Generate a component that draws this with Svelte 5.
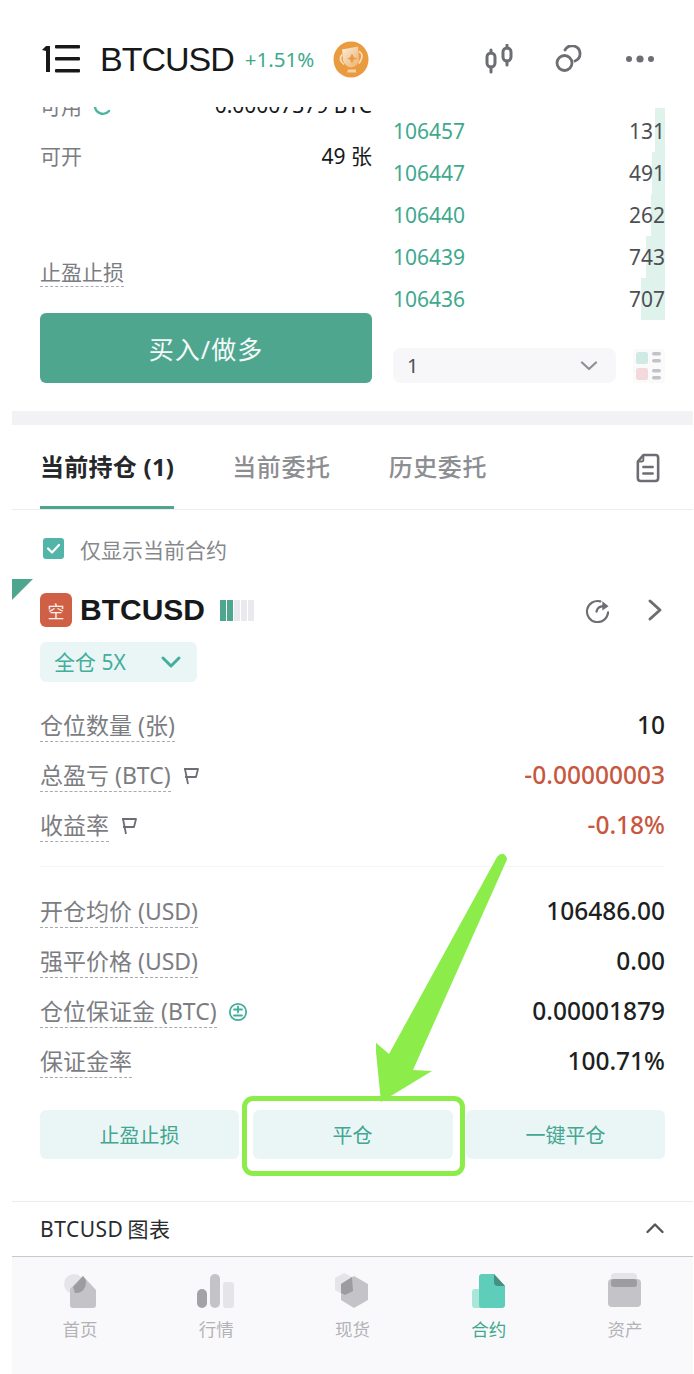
<script>
    const asks = [
        { price: '106457', size: '131', depth: 10 },
        { price: '106447', size: '491', depth: 13 },
        { price: '106440', size: '262', depth: 14 },
        { price: '106439', size: '743', depth: 19 },
        { price: '106436', size: '707', depth: 24 }
    ];

    const topRows = [
        { label: '仓位数量 (张)', value: '10' },
        { label: '总盈亏 (BTC)', value: '-0.00000003', flag: true, down: true },
        { label: '收益率', value: '-0.18%', flag: true, down: true }
    ];

    const bottomRows = [
        { label: '开仓均价 (USD)', value: '106486.00' },
        { label: '强平价格 (USD)', value: '0.00' },
        { label: '仓位保证金 (BTC)', value: '0.00001879', plus: true },
        { label: '保证金率', value: '100.71%' }
    ];

    const navItems = ['首页', '行情', '现货', '合约', '资产'];
</script>

<div class="page">
    <header class="top">
        <svg class="logo" width="40" height="28" viewBox="0 0 40 28" fill="#17181a">
            <path d="M1 5 L5 1 H9 V27 H5 V6 Z" />
            <rect x="14" y="0" width="25" height="3.6" rx="1" />
            <rect x="14" y="12" width="25" height="3.6" rx="1" />
            <rect x="14" y="24" width="25" height="3.6" rx="1" />
        </svg>
        <span class="symbol">BTCUSD</span>
        <span class="change">+1.51%</span>
        <svg class="medal" width="36" height="37" viewBox="0 0 36 36">
            <defs>
                <linearGradient id="cup" x1="0" y1="0" x2="1" y2="1">
                    <stop offset="0" stop-color="#fbeedd" />
                    <stop offset="1" stop-color="#eeb06a" />
                </linearGradient>
            </defs>
            <ellipse cx="18" cy="18" rx="17.5" ry="18" fill="#ea9b3f" />
            <path d="M9 8 L25 5 L26 19 Q25 25 18 26 Q12 25 10 19 Z" fill="url(#cup)" />
            <path d="M26 10 Q32 13 26 22 M9 13 Q5 18 11 23" fill="none" stroke="#f9e0c0" stroke-width="1.6" />
            <path d="M15 28 H23 V31 H14 Z" fill="#f6d3a6" />
            <path d="M19 12 L21 16 L25 17 L21 18 L19 22 L17 18 L14 17 L17 16 Z" fill="#e89a45" />
        </svg>
        <div class="top-actions">
            <svg width="28" height="30" viewBox="0 0 28 30" fill="none" stroke="#6d6e73" stroke-width="3" stroke-linecap="round">
                <rect x="2" y="9" width="8" height="14" rx="4" />
                <path d="M6 6 V9 M6 23 V28" />
                <rect x="18" y="4" width="8" height="13" rx="4" />
                <path d="M22 1 V4 M22 17 V21" />
            </svg>
            <svg width="28" height="28" viewBox="0 0 28 28" fill="none" stroke="#6d6e73" stroke-width="2.8">
                <circle cx="9.5" cy="18" r="7.5" />
                <path d="M10 5 A8 8 0 0 1 25 8 A8 8 0 0 1 20 16" stroke-linecap="round" />
            </svg>
            <svg width="30" height="10" viewBox="0 0 30 10" fill="#6d6e73">
                <circle cx="4" cy="5" r="3" />
                <circle cx="15" cy="5" r="3.6" />
                <circle cx="26" cy="5" r="3" />
            </svg>
        </div>
    </header>

    <section class="trade">
        <div class="trade-form">
            <div class="form-row">
                <span class="muted">可用
                    <svg class="swap" width="20" height="20" viewBox="0 0 20 20" fill="none" stroke="#4db3a2" stroke-width="2.4" stroke-linecap="round">
                        <path d="M2 8 A8 8 0 0 0 16 14 M12 8 H18" />
                    </svg>
                </span>
                <span>0.00007379 BTC</span>
            </div>
            <div class="form-row">
                <span class="muted">可开</span>
                <span>49 张</span>
            </div>
            <div class="stop-row"><span class="muted dashed">止盈止损</span></div>
            <button class="buy">买入/做多</button>
        </div>

        <div class="book">
            <div class="asks">
                {#each asks as ask}
                    <div class="ask">
                        <span class="depth" style="width: {ask.depth}px"></span>
                        <span class="price">{ask.price}</span>
                        <span class="size">{ask.size}</span>
                    </div>
                {/each}
            </div>
            <div class="book-foot">
                <div class="select">
                    <span>1</span>
                    <svg width="18" height="10" viewBox="0 0 18 10" fill="none" stroke="#8f9095" stroke-width="2.2" stroke-linecap="round" stroke-linejoin="round">
                        <path d="M2 1.5 L9 8 L16 1.5" />
                    </svg>
                </div>
                <svg class="layout" width="32" height="34" viewBox="0 0 32 34">
                    <rect width="32" height="34" rx="3" fill="#fafafb" />
                    <rect x="3" y="3" width="12" height="12" rx="2.5" fill="#cfeae5" />
                    <rect x="3" y="19" width="12" height="12" rx="2.5" fill="#f3d9dc" />
                    <rect x="19" y="3" width="9" height="3.5" rx="1.7" fill="#c2c3c8" />
                    <rect x="19" y="10" width="9" height="3.5" rx="1.7" fill="#c2c3c8" />
                    <rect x="19" y="20" width="9" height="3.5" rx="1.7" fill="#c2c3c8" />
                    <rect x="19" y="27" width="9" height="3.5" rx="1.7" fill="#c2c3c8" />
                </svg>
            </div>
        </div>
    </section>

    <div class="band"></div>

    <nav class="tabs">
        <span class="tab active">当前持仓 (1)</span>
        <span class="tab">当前委托</span>
        <span class="tab">历史委托</span>
        <svg class="doc" width="24" height="30" viewBox="0 0 26 32" fill="none" stroke="#6d6e73" stroke-width="2.8" stroke-linejoin="round">
            <path d="M8 2 H21 Q24 2 24 5 V27 Q24 30 21 30 H5 Q2 30 2 27 V9 Z" />
            <path d="M8 2 V7 Q8 9 6 9 H2" stroke-width="2" />
            <path d="M8 15 H18 M8 22 H18" stroke-linecap="round" />
        </svg>
    </nav>

    <label class="only-current">
        <svg width="21" height="21" viewBox="0 0 21 21">
            <rect width="21" height="21" rx="3" fill="#53b5a7" />
            <path d="M5 10.5 L9 14.5 L16 7" fill="none" stroke="#fff" stroke-width="2.2" stroke-linecap="round" stroke-linejoin="round" />
        </svg>
        仅显示当前合约
    </label>

    <article class="position">
        <span class="corner"></span>
        <div class="pos-head">
            <span class="side">空</span>
            <span class="pos-name">BTCUSD</span>
            <span class="risk">
                {#each [1, 2, 3, 4, 5] as n}
                    <i class:on={n < 3}></i>
                {/each}
            </span>
            <svg class="share" width="25" height="25" viewBox="0 0 26 26" fill="none" stroke="#6d6e73" stroke-width="2.2" stroke-linecap="round">
                <path d="M16 3.5 A11 11 0 1 0 24 15" />
                <path d="M12 14 Q13 9 19 8.5" stroke-width="2.4" />
                <path d="M18 3.5 L24.5 8.5 L18 13 Z" fill="#6d6e73" stroke="none" />
            </svg>
            <svg class="next" width="16" height="24" viewBox="0 0 16 24" fill="none" stroke="#6d6e73" stroke-width="3" stroke-linecap="round" stroke-linejoin="round">
                <path d="M3 3 L13 12 L3 21" />
            </svg>
        </div>

        <div class="chip">
            <span>全仓 5X</span>
            <svg width="22" height="14" viewBox="0 0 22 14" fill="none" stroke="#43ae9c" stroke-width="3" stroke-linecap="round" stroke-linejoin="round">
                <path d="M3 3 L11 11 L19 3" />
            </svg>
        </div>

        <div class="stats first">
            {#each topRows as row}
                <div class="stat">
                    <span class="muted dashed">{row.label}</span>
                    {#if row.flag}
                        <svg class="flag" width="18" height="18" viewBox="0 0 18 18" fill="none" stroke="#6d6e73" stroke-width="1.8" stroke-linejoin="round">
                            <path d="M2 2 H16 L14 10 H3 M3 2 L6 17" />
                        </svg>
                    {/if}
                    <span class="value" class:down={row.down}>{row.value}</span>
                </div>
            {/each}
        </div>

        <div class="stats second">
            {#each bottomRows as row}
                <div class="stat">
                    <span class="muted dashed">{row.label}</span>
                    {#if row.plus}
                        <svg class="flag" width="20" height="20" viewBox="0 0 20 20" fill="none" stroke="#43ae9c" stroke-width="1.8" stroke-linecap="round">
                            <circle cx="10" cy="10" r="8.2" />
                            <path d="M6 7.5 H14 M10 4.5 V10.5 M6 13.5 H14" />
                        </svg>
                    {/if}
                    <span class="value">{row.value}</span>
                </div>
            {/each}
        </div>

        <div class="actions">
            <button>止盈止损</button>
            <button>平仓</button>
            <button>一键平仓</button>
        </div>
    </article>

    <div class="chart-row">
        <span>BTCUSD<span class="chart-word">图表</span></span>
        <svg width="20" height="12" viewBox="0 0 20 12" fill="none" stroke="#55565a" stroke-width="2.4" stroke-linecap="round" stroke-linejoin="round">
            <path d="M2.5 10 L10 2.5 L17.5 10" />
        </svg>
    </div>

    <footer class="nav">
        {#each navItems as item, i}
            <div class="nav-item" class:current={i === 3}>
                <svg width="40" height="36" viewBox="0 0 40 36">
                    {#if i === 0}
                        <g transform="translate(3 0)">
                            <circle cx="11" cy="11" r="10" fill="#e5e5e9" />
                            <path d="M20 3 L33 17 V32 Q33 35 30 35 H10 Q7 35 7 32 V16 Z" fill="#c3c3c8" />
                            <path d="M20 3 L10 14 L12 20 A10 10 0 0 0 20 3 Z" fill="#9d9da1" />
                        </g>
                    {:else if i === 1}
                        <rect x="1" y="16" width="10" height="19" rx="5" fill="#a3a3a7" />
                        <rect x="14" y="1" width="10" height="34" rx="5" fill="#c3c3c8" />
                        <rect x="27" y="9" width="11" height="26" rx="3" fill="#e5e5e9" />
                    {:else if i === 2}
                        <g transform="translate(2 0)">
                            <path d="M10 0 L20 5 V17 L10 22 L1 17 V5 Z" fill="#e5e5e9" />
                            <path d="M20 3 L34 11 V27 L20 35 L7 27 V11 Z" fill="#c3c3c8" />
                            <path d="M18 4 L7 11 V20 L11 22 L19 18 Z" fill="#9d9da1" />
                        </g>
                    {:else if i === 3}
                        <g transform="translate(1 0)">
                            <rect x="2" y="16" width="14" height="19" rx="3" fill="#a8e6d8" />
                            <path d="M12 1 H24 L35 13 V32 Q35 35 32 35 H12 Q9 35 9 32 V4 Q9 1 12 1 Z" fill="#5ecdb9" />
                            <path d="M24 1 L35 13 H28 Q24 13 24 9 Z" fill="#47907f" />
                        </g>
                    {:else}
                        <rect x="6" y="0" width="26" height="14" rx="4" fill="#e5e5e9" />
                        <rect x="3" y="6" width="33" height="28" rx="4" fill="#c3c3c8" />
                        <rect x="6" y="6" width="26" height="8" rx="3" fill="#9d9da1" />
                    {/if}
                </svg>
                <span>{item}</span>
            </div>
        {/each}
    </footer>

    <!-- annotation drawn over the screenshot -->
    <svg class="arrow" width="135" height="255" viewBox="376 852 135 255">
        <path d="M497 857 Q503 850 507 858 Q507 861 505 864 L413 1070 L432 1071 L381 1102 L375 1042 L389 1054 Z" fill="#8ced4a" />
    </svg>
    <span class="highlight"></span>
</div>

<style>
    :global(body) {
        background: #fff;
    }

    .page {
        position: relative;
        width: 694px;
        height: 1374px;
        overflow: hidden;
        padding: 0 1px 0 12px;
        box-sizing: border-box;
        background: #fff;
        color: #17181a;
        font-family: "Noto Sans", "Noto Sans CJK SC", sans-serif;
    }

    .top {
        height: 107px;
        margin-left: -12px;
        padding: 11px 38px 0 41px;
        box-sizing: border-box;
        display: flex;
        align-items: center;
    }

    .logo {
        margin-right: 19px;
    }

    .symbol {
        font-family: "Liberation Sans", sans-serif;
        font-size: 34px;
        letter-spacing: -1px;
        margin-right: 11px;
    }

    .change {
        font-size: 20.5px;
        color: #3fa98e;
        margin-right: 19px;
    }

    .top-actions {
        margin-left: auto;
        display: flex;
        align-items: center;
        gap: 42px;
    }

    .trade {
        height: 304px;
        padding: 0 28px;
        display: grid;
        grid-template-columns: 332px 1fr;
        gap: 21px;
        overflow: hidden;
    }

    .trade-form {
        margin-top: -27px;
    }

    .form-row {
        height: 50px;
        display: flex;
        align-items: center;
        justify-content: space-between;
        font-size: 21px;
    }

    .swap {
        vertical-align: -3px;
        margin-left: 6px;
    }

    .muted {
        color: #7c7d82;
        font-size: 21px;
    }

    .dashed {
        border-bottom: 1px dashed #a9aaae;
        line-height: 27px;
    }

    .stop-row {
        margin-top: 79px;
        height: 28px;
    }

    .buy {
        display: block;
        width: 100%;
        height: 70px;
        margin-top: 26px;
        border: none;
        border-radius: 6px;
        background: #4fa68f;
        color: #f4faf8;
        font: inherit;
        font-size: 25px;
        letter-spacing: 1px;
    }

    .asks {
        margin-top: 1px;
    }

    .ask {
        position: relative;
        height: 42px;
        display: flex;
        align-items: center;
        justify-content: space-between;
        font-size: 21px;
    }

    .ask:first-child {
        height: 44px;
        padding-top: 2px;
        box-sizing: border-box;
    }

    .depth {
        position: absolute;
        top: 0;
        bottom: 0;
        right: 0;
        background: #e0f2ec;
    }

    .price {
        color: #3fa98e;
    }

    .size {
        position: relative;
        color: #4e4f53;
    }

    .book-foot {
        margin-top: 28px;
        display: flex;
        align-items: center;
        justify-content: space-between;
    }

    .select {
        width: 223px;
        height: 35px;
        padding: 0 18px 0 14px;
        box-sizing: border-box;
        display: flex;
        align-items: center;
        justify-content: space-between;
        border-radius: 8px;
        background: #f7f7fa;
        color: #4e4f53;
        font-size: 20px;
    }

    .band {
        height: 14px;
        background: #f2f2f4;
    }

    .tabs {
        height: 85px;
        padding: 0 28px;
        box-sizing: border-box;
        display: flex;
        gap: 58px;
        align-items: stretch;
        border-bottom: 1px solid #ececee;
    }

    .tab {
        display: flex;
        align-items: center;
        font-size: 24px;
        font-weight: 500;
        letter-spacing: 0.6px;
        color: #8d8e92;
        padding-bottom: 1px;
        border-bottom: 3px solid transparent;
    }

    .tab.active {
        color: #26272a;
        font-weight: 700;
        letter-spacing: 0.25px;
        border-bottom-color: #4fa68f;
    }

    .doc {
        margin: 28px 5px 0 auto;
    }

    .only-current {
        height: 69px;
        padding: 8px 0 0 31px;
        box-sizing: border-box;
        display: flex;
        align-items: center;
        gap: 16px;
        font-size: 21px;
        color: #87888c;
    }

    .position {
        position: relative;
        padding: 14px 28px 0;
    }

    .corner {
        position: absolute;
        top: 0;
        left: 0;
        border-style: solid;
        border-width: 21px 21px 0 0;
        border-color: #4fa68f transparent transparent transparent;
    }

    .pos-head {
        height: 34px;
        display: flex;
        align-items: center;
    }

    .side {
        width: 32px;
        height: 34px;
        border-radius: 6px;
        background: #cf5f45;
        color: #fbeee9;
        font-size: 17px;
        display: flex;
        align-items: center;
        justify-content: center;
    }

    .pos-name {
        margin-left: 8px;
        font-family: "Liberation Sans", sans-serif;
        font-size: 30px;
        font-weight: 700;
    }

    .risk {
        display: flex;
        gap: 1px;
        margin-left: 15px;
    }

    .risk i {
        width: 6px;
        height: 21px;
        background: #e9e9ee;
    }

    .risk i.on {
        background: #4fa68f;
    }

    .share {
        margin-left: auto;
    }

    .next {
        margin-left: 37px;
        margin-right: 2px;
    }

    .chip {
        width: 157px;
        height: 40px;
        margin-top: 15px;
        padding: 0 15px 3px 14px;
        box-sizing: border-box;
        display: flex;
        align-items: center;
        justify-content: space-between;
        border-radius: 6px;
        background: #eaf6f5;
        color: #43ae9c;
        font-size: 21px;
    }

    .chip svg {
        margin-top: 3px;
    }

    .stats.first {
        margin-top: 18px;
        padding-bottom: 16px;
        border-bottom: 1px solid #f4f4f5;
    }

    .stats.second {
        margin-top: 19px;
    }

    .stat {
        height: 50px;
        display: flex;
        align-items: center;
        gap: 11px;
    }

    .stat .muted {
        font-size: 23px;
        line-height: 31px;
        margin-top: 1px;
    }

    .flag {
        margin-top: 2px;
    }

    .value {
        margin-left: auto;
        font-size: 24.5px;
        font-weight: 500;
        line-height: 30px;
        margin-top: -1px;
        color: #1e1f22;
    }

    .value.down {
        color: #c8573f;
    }

    .actions {
        margin-top: 24px;
        display: grid;
        grid-template-columns: 199px 200px 199px;
        gap: 13.5px;
    }

    .actions button {
        height: 49px;
        border: none;
        border-radius: 6px;
        background: #eaf6f5;
        color: #43a592;
        font: inherit;
        font-size: 20px;
    }

    .chart-row {
        height: 56px;
        margin-top: 42px;
        padding: 0 28px 2px;
        box-sizing: border-box;
        border-top: 1px solid #ececee;
        border-bottom: 1px solid #c9c9cc;
        display: flex;
        align-items: center;
        justify-content: space-between;
        font-size: 21px;
        letter-spacing: 0.5px;
        color: #2a2b2e;
    }

    .chart-word {
        margin-left: 4px;
    }

    .nav {
        height: 118px;
        padding-top: 16px;
        box-sizing: border-box;
        display: grid;
        grid-template-columns: repeat(5, 1fr);
        background: #f9f9fb;
    }

    .nav-item {
        display: flex;
        flex-direction: column;
        align-items: center;
        gap: 7px;
        color: #b3b3b7;
        font-size: 17.5px;
    }

    .nav-item.current {
        color: #3fa98e;
    }

    .arrow {
        position: absolute;
        left: 376px;
        top: 852px;
    }

    .highlight {
        position: absolute;
        left: 242px;
        top: 1096px;
        width: 223px;
        height: 80px;
        box-sizing: border-box;
        border: 5px solid #8ced4a;
        border-radius: 11px;
    }
</style>
